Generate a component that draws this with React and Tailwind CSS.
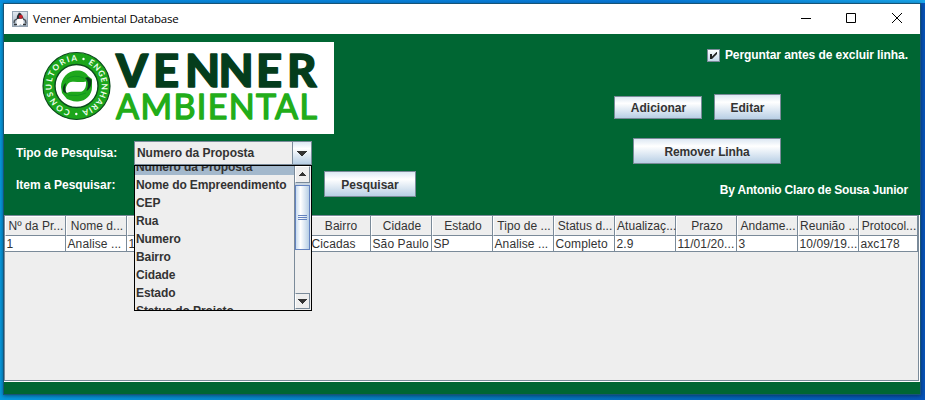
import React from "react";

const FONT = "font-['Liberation_Sans',Arial,sans-serif]";

function Button({ className, children }) {
  return (
    <button
      className={`flex shrink-0 items-center justify-center border border-[#7a8a99] bg-linear-to-b from-[#dde8f3] via-white via-30% to-[#b8cfe5] text-xs font-bold text-[#333] ${className}`}
    >
      {children}
    </button>
  );
}

function TitleBar() {
  return (
    <header className="flex h-[30px] shrink-0 items-center bg-white pl-2">
      <svg width="16" height="16" viewBox="0 0 16 16">
        <defs>
          <linearGradient id="tile" x1="0" y1="0" x2="0" y2="1">
            <stop offset="0" stopColor="#e3e9ef" />
            <stop offset="1" stopColor="#9fb0c0" />
          </linearGradient>
        </defs>
        <rect x="0.5" y="0.5" width="15" height="15" fill="url(#tile)" stroke="#94a3b2" />
        <path d="M7 1.5L9 2.5L11.5 7L12 9H4.5L5 5Z" fill="#2a2e33" />
        <path d="M5 8L11 7.5L12 14H9.5L8.5 13L7 14.5H4Z" fill="#fdfdfd" />
        <path d="M5 8L2.5 9.5L2 12M11.5 8L13.5 9.5L14 12.5" fill="none" stroke="#4a5158" strokeWidth="1.4" />
        <path d="M2 13.5H5M11 13.5H14" stroke="#30353a" strokeWidth="1.5" />
        <ellipse cx="8.8" cy="5.8" rx="2" ry="2" fill="#c8202c" />
      </svg>
      <h1 className="ml-[5px] flex-1 font-['Open_Sans','Noto_Sans',sans-serif] text-[11.5px] tracking-[-0.17px] text-black">
        Venner Ambiental Database
      </h1>
      <svg width="120" height="30" viewBox="0 0 120 30" fill="none" stroke="#000">
        <path d="M1 14.5H11" />
        <path d="M46.5 9.5H55.5V18.5H46.5Z" />
        <path d="M92 9L102 19M102 9L92 19" />
      </svg>
    </header>
  );
}

function Logo() {
  return (
    <div className="h-[92px] w-[330px] bg-white">
      <svg width="330" height="92" viewBox="0 0 330 92">
        <defs>
          <path id="ring" d="M72.5 69A25 25 0 1 1 72.6 69" />
        </defs>
        <circle cx="72.5" cy="44" r="33.5" fill="#1ba51b" stroke="#0b4b1d" strokeWidth="1.2" />
        <circle cx="72.5" cy="44" r="21.5" fill="#fff" stroke="#0b4b1d" strokeWidth="1.4" />
        <g fill="#f1fff1" fontFamily="Lato, sans-serif" fontSize="8.2" fontWeight="700">
          <text>
            <textPath href="#ring" startOffset="6" textLength="73">CONSULTORIA</textPath>
          </text>
          <text>
            <textPath href="#ring" startOffset="90" textLength="61">ENGENHARIA</textPath>
          </text>
        </g>
        <circle cx="79.5" cy="17" r="1.2" fill="#fff" />
        <circle cx="72.3" cy="72" r="1.2" fill="#fff" />
        <path
          d="M57 45C57 36 64 29 72 28.5C77 28 82 30 84 34L88 37V45C88 53 82 59 74 59.5C69 60 66 58 63 57L58 51Z"
          fill="#1fa81c"
        />
        <path
          d="M61.5 50C61.5 44 64 40.5 67 40C71 39 76 41 82 39.5C82.5 44 81 48 78 49.5C73 50.5 67 48.5 62.5 51Z"
          fill="#fff"
        />
        <path d="M81 36C84 38 85 43 82.5 49C86 47 88 43 87.5 38L84 35Z" fill="#0a3a1a" />
        <path d="M63.5 52C61 49 60.5 46 62 41C59 43 58 47 59.5 50Z" fill="#0a3a1a" />
        <path d="M63 37Q70 32 80 36M82 51Q74 55 64 53" fill="none" stroke="#0c8f20" strokeWidth="0.8" />
        <g
          fontFamily="Lato, sans-serif"
          fontSize="45.5"
          fontWeight="900"
          fill="#043d1c"
          stroke="#043d1c"
          strokeWidth="1.4"
          strokeLinejoin="round"
        >
          <text x="112 149 181 214.5 252 283" y="45">
            VENNER
          </text>
        </g>
        <text
          x="112"
          y="77.3"
          textLength="201"
          lengthAdjust="spacing"
          fontFamily="Lato, sans-serif"
          fontSize="34"
          fontWeight="400"
          fill="#22ad19"
          stroke="#22ad19"
          strokeWidth="1.4"
          strokeLinejoin="round"
        >
          AMBIENTAL
        </text>
      </svg>
    </div>
  );
}

const OPTIONS = [
  "Numero da Proposta",
  "Nome do Empreendimento",
  "CEP",
  "Rua",
  "Numero",
  "Bairro",
  "Cidade",
  "Estado",
  "Status do Projeto",
];

function Popup() {
  return (
    <div className="absolute top-[24px] left-0 z-10 flex h-[146px] w-[178px] overflow-hidden border border-black bg-[#eee]">
      <ul className="-mt-[9px] flex-1">
        {OPTIONS.map((option, i) => (
          <li
            key={option}
            className={`h-[18px] pl-px leading-[20px] tracking-[-0.1px] whitespace-nowrap ${i === 0 ? "bg-[#a3b8cc]" : ""}`}
          >
            {option}
          </li>
        ))}
      </ul>
      <div className="flex w-[17px] shrink-0 flex-col border-l border-[#7a8a99] bg-[#eee] pr-px">
        <div className="flex h-[17px] items-center justify-center border border-b-[#7a8a99] border-l-white border-t-white border-r-[#7a8a99]">
          <svg width="9" height="5" viewBox="0 0 9 5" shapeRendering="crispEdges">
            <path d="M4 0H5V1H6V2H7V3H8V4H1V3H2V2H3V1H4Z" fill="#333" />
          </svg>
        </div>
        <div className="h-[2px] bg-[#c8d4e0]" />
        <div className="flex h-[65px] flex-col items-center justify-center gap-px border border-[#6382bf] bg-linear-to-r from-[#c8dcf0] via-white via-35% to-[#b8cfe5]">
          <i className="h-px w-[9px] bg-[#6382bf]" />
          <i className="h-px w-[9px] bg-[#6382bf]" />
          <i className="h-px w-[9px] bg-[#6382bf]" />
        </div>
        <div className="flex-1" />
        <div className="mb-px flex h-[16px] items-center justify-center border border-t-[#7a8a99] border-l-white border-r-[#7a8a99] border-b-[#7a8a99]">
          <svg width="9" height="5" viewBox="0 0 9 5" shapeRendering="crispEdges">
            <path d="M0 0H9V1H8V2H7V3H6V4H5V5H4V4H3V3H2V2H1V1H0Z" fill="#333" />
          </svg>
        </div>
      </div>
    </div>
  );
}

function Toolbar() {
  return (
    <section className="flex h-[181px] shrink-0 justify-between bg-[#006633] pt-2 text-xs font-bold text-white">
      <div className="flex flex-col">
        <Logo />
        <div className="mt-[7px] flex h-[24px] items-center">
          <span className="w-[130px] pl-3 tracking-[-0.08px]">Tipo de Pesquisa:</span>
          <div className="relative flex h-[24px] w-[178px] border border-[#7a8a99] bg-[#eee] text-[#333]">
            <span className="flex-1 pl-[2px] leading-[23px] tracking-[-0.05px]">Numero da Proposta</span>
            <span className="flex w-[19px] items-center justify-center border-l border-[#7a8a99] bg-linear-to-b from-[#dde8f3] via-white via-30% to-[#b8cfe5]">
              <svg width="10" height="5" viewBox="0 0 10 5" shapeRendering="crispEdges">
                <path d="M0 0H10V1H9V2H8V3H7V4H6V5H4V4H3V3H2V2H1V1H0Z" fill="#333" />
              </svg>
            </span>
            <div className="absolute -top-px -left-px">
              <Popup />
            </div>
          </div>
        </div>
        <div className="mt-[6px] flex h-[26px] items-center">
          <span className="w-[130px] pt-[2px] pl-3">Item a Pesquisar:</span>
          <span className="w-[178px]" />
          <Button className="ml-3 h-[26px] w-[92px] pt-px">Pesquisar</Button>
        </div>
      </div>
      <div className="flex w-[310px] flex-col pr-3">
        <label className="mt-[5px] flex h-4 items-center justify-end gap-[5px]">
          <svg width="13" height="13" viewBox="0 0 13 13">
            <defs>
              <linearGradient id="check" x1="0" y1="0" x2="0" y2="1">
                <stop offset="0" stopColor="#fff" />
                <stop offset="1" stopColor="#c4d7ea" />
              </linearGradient>
            </defs>
            <rect x="0.5" y="0.5" width="12" height="12" fill="url(#check)" stroke="#7a8a99" />
            <path d="M3 5H5V7.5L9.5 3H10V5L5 10H3Z" fill="#222" />
          </svg>
          <span className="tracking-[-0.07px]">Perguntar antes de excluir linha.</span>
        </label>
        <div className="mt-[31px] flex h-[26px] items-center gap-3 pl-1">
          <Button className="h-[23px] w-[88px] pt-px pl-px">Adicionar</Button>
          <Button className="h-[26px] w-[67px] pt-px">Editar</Button>
        </div>
        <Button className="mt-[18px] ml-[23px] h-[26px] w-[148px] pt-px tracking-[-0.12px]">
          Remover Linha
        </Button>
        <span className="mt-[18px] self-end tracking-[-0.19px]">By Antonio Claro de Sousa Junior</span>
      </div>
    </section>
  );
}

const COLUMNS = [
  ["Nº da Pr...", "1"],
  ["Nome d...", "Analise ..."],
  ["", "1"],
  ["", ""],
  ["", ""],
  ["Bairro", "Cicadas"],
  ["Cidade", "São Paulo"],
  ["Estado", "SP"],
  ["Tipo de ...", "Analise ..."],
  ["Status d...", "Completo"],
  ["Atualizaç...", "2.9"],
  ["Prazo", "11/01/20..."],
  ["Andame...", "3"],
  ["Reunião ...", "10/09/19..."],
  ["Protocol...", "axc178"],
];

function Table() {
  return (
    <section className="flex h-[167px] shrink-0 flex-col border-r border-b border-white bg-[#eee]">
      <div className="flex-1 border border-[#7a8a99] text-xs text-[#333]">
        <div className="flex">
          {COLUMNS.map(([title, value], i) => (
            <div
              key={i}
              className="w-[61px] shrink-0 border-r border-[#7a8a99] whitespace-nowrap last:w-[59px]"
            >
              <div className="h-[20px] border-t border-b border-l border-t-white border-b-[#7a8a99] border-l-white pl-px text-center leading-[19px] tracking-[0.05px]">
                {title}
              </div>
              <div className="h-[16px] border-b border-[#7a8a99] bg-white pl-[1.5px] leading-[16px] tracking-[0.1px]">
                {value}
              </div>
            </div>
          ))}
        </div>
      </div>
    </section>
  );
}

export default function App() {
  return (
    <div
      className={`h-[400px] w-[925px] overflow-hidden bg-linear-to-r from-[#0799df] via-[#087bc0] via-50% to-[#0754b8] ${FONT}`}
    >
      <div className="h-[3px] bg-linear-to-r from-[#0a8fe0] via-[#0878d8] via-70% to-[#19a5ea]" />
      <main className="ml-[3px] flex h-[392px] w-[918px] flex-col border border-[#175477] bg-[#006633] shadow-[0_1px_4px_rgba(0,0,0,0.45)]">
        <TitleBar />
        <Toolbar />
        <Table />
      </main>
    </div>
  );
}
